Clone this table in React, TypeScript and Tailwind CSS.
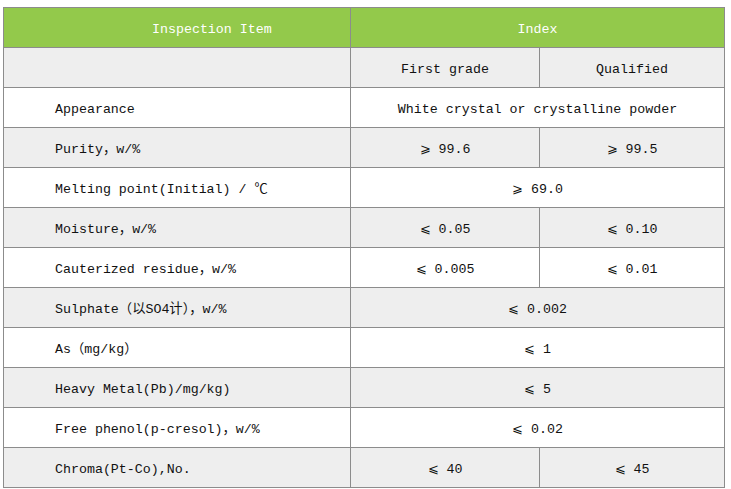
type Row = {
  item: string;
  values: string[]; // one value spans both index columns
};

const rows: Row[] = [
  { item: 'Appearance', values: ['White crystal or crystalline powder'] },
  { item: 'Purity，w/%', values: ['⩾ 99.6', '⩾ 99.5'] },
  { item: 'Melting point(Initial) / ℃', values: ['⩾ 69.0'] },
  { item: 'Moisture，w/%', values: ['⩽ 0.05', '⩽ 0.10'] },
  { item: 'Cauterized residue，w/%', values: ['⩽ 0.005', '⩽ 0.01'] },
  { item: 'Sulphate（以SO4计），w/%', values: ['⩽ 0.002'] },
  { item: 'As（mg/kg）', values: ['⩽ 1'] },
  { item: 'Heavy Metal(Pb)/mg/kg)', values: ['⩽ 5'] },
  { item: 'Free phenol(p-cresol)，w/%', values: ['⩽ 0.02'] },
  { item: 'Chroma(Pt-Co),No.', values: ['⩽ 40', '⩽ 45'] },
];

const cell = 'border border-[#8c8c8c] h-[40px] p-0 pt-[5px]';

export default function App() {
  return (
    <div
      className="w-[731px] h-[489px] bg-white pt-[7px] pl-[3px]"
      style={{ fontFamily: '"Liberation Mono", "DejaVu Sans Mono", "Noto Sans CJK SC", monospace' }}
    >
      <table className="border-collapse table-fixed w-[721px] text-[13.3px] text-[#111]">
        <colgroup>
          <col className="w-[347px]" />
          <col className="w-[189px]" />
          <col className="w-[185px]" />
        </colgroup>
        <tbody>
          <tr className="bg-[#93c94b] text-white">
            <td className={`${cell} h-[39px] pl-[148px] text-left`}>Inspection Item</td>
            <td className={`${cell} h-[39px] text-center`} colSpan={2}>
              Index
            </td>
          </tr>
          <tr className="bg-[#eeeeee]">
            <td className={cell}></td>
            <td className={`${cell} text-center`}>First grade</td>
            <td className={`${cell} text-center`}>Qualified</td>
          </tr>
          {rows.map((row, i) => (
            <tr key={row.item} className={i % 2 === 0 ? 'bg-white' : 'bg-[#eeeeee]'}>
              <td className={`${cell} pl-[51px] text-left whitespace-nowrap`}>{row.item}</td>
              {row.values.length === 1 ? (
                <td className={`${cell} text-center whitespace-nowrap`} colSpan={2}>
                  {row.values[0]}
                </td>
              ) : (
                row.values.map((v) => (
                  <td key={v} className={`${cell} text-center whitespace-nowrap`}>
                    {v}
                  </td>
                ))
              )}
            </tr>
          ))}
        </tbody>
      </table>
    </div>
  );
}
